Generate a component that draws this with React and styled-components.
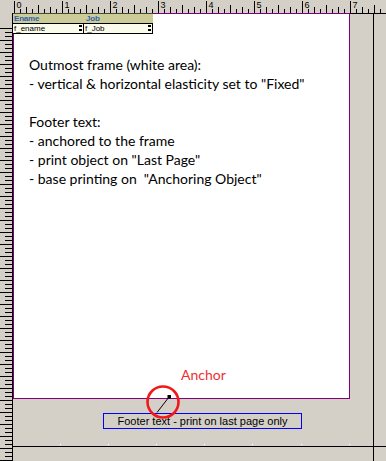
import React from "react"
import styled, { createGlobalStyle } from "styled-components"

const GlobalStyle = createGlobalStyle`
  html, body {
    margin: 0;
    padding: 0;
    background: #d4d0c8;
    overflow: hidden;
  }
`

const notes = [
  "Outmost frame (white area):",
  '- vertical & horizontal elasticity set to "Fixed"',
  "",
  "Footer text:",
  "- anchored to the frame",
  '- print object on "Last Page"',
  '- base printing on  "Anchoring Object"',
]

const TopTicks = () => {
  const ticks = []
  for (let k = 0; k < 62; k++) {
    const x = 1.5 + k * 6
    const m = k % 8
    const h = m === 0 ? 12 : m === 4 ? 8 : m % 2 === 0 ? 6 : 4
    ticks.push(<line key={k} x1={x} x2={x} y1={13 - h} y2={13} stroke="#000" strokeWidth="1" />)
    if (m === 0) {
      ticks.push(
        <text key={"n" + k} x={x + 2} y={8} fontSize="9" fontFamily="Liberation Sans, sans-serif" fill="#000">
          {k / 8}
        </text>
      )
    }
  }
  return (
    <svg width="373" height="13">
      {ticks}
    </svg>
  )
}

const SideTicks = () => {
  const ticks = []
  for (let k = 0; k < 113; k++) {
    const y = 15.5 + k * 4
    const long = k % 3 === 0
    ticks.push(<line key={k} x1={long ? 0 : 5} x2={12} y1={y} y2={y} stroke="#000" strokeWidth="1" />)
  }
  return (
    <svg width="12" height="448">
      {ticks}
    </svg>
  )
}

const BaseDots = () => (
  <svg width="360" height="2">
    {[47, 95, 143, 191, 239, 288, 336].map((x) => (
      <rect key={x} x={x} y={0} width="1" height="1" fill="#fff" />
    ))}
  </svg>
)

const AnchorMark = () => (
  <svg width="40" height="40" viewBox="0 0 40 40">
    <circle cx="19" cy="19" r="15.5" fill="none" stroke="#f01818" strokeWidth="2.6" />
    <line x1="25" y1="14" x2="13" y2="29.5" stroke="#000" strokeWidth="1" />
    <rect x="23.5" y="12" width="3.5" height="3.5" fill="#000" />
  </svg>
)

export default function App() {
  return (
    <>
      <GlobalStyle />
      <Window>
        <Corner />
        <TopRuler>
          <TopTicks />
        </TopRuler>
        <SideRuler>
          <SideTicks />
        </SideRuler>
        <Canvas>
          <Sheet>
            <Page>
              <Band>
                <BandHead>
                  <BandCell w={71}>Ename</BandCell>
                  <BandCell>Job</BandCell>
                </BandHead>
                <BandRow>
                  <FieldCell w={71}>
                    f_ename
                    <Handle />
                  </FieldCell>
                  <FieldCell>
                    f_Job
                    <Handle />
                  </FieldCell>
                </BandRow>
              </Band>
              <Notes>
                {notes.map((line, i) => (
                  <NoteLine key={i}>{line || "\u00a0"}</NoteLine>
                ))}
              </Notes>
              <AnchorLabel>Anchor</AnchorLabel>
            </Page>
            <FooterBox>Footer text - print on last page only</FooterBox>
            <AnchorSpot>
              <AnchorMark />
            </AnchorSpot>
            <Dots>
              <BaseDots />
            </Dots>
          </Sheet>
          <Cell />
          <Cell />
          <Cell />
        </Canvas>
      </Window>
    </>
  )
}

const Window = styled.div`
  display: grid;
  grid-template-columns: 13px 1fr;
  grid-template-rows: 13px 1fr;
  width: 386px;
  height: 461px;
  overflow: hidden;
  background: #d4d0c8;
`

const Corner = styled.div`
  background: #d4d0c8;
`

const TopRuler = styled.div`
  background: #d4d0c8;
  line-height: 0;
  overflow: hidden;
`

const SideRuler = styled.div`
  background: #d4d0c8;
  border-right: 1px solid #000;
  line-height: 0;
  overflow: hidden;
`

const Canvas = styled.div`
  display: grid;
  grid-template-columns: 360px 1fr;
  grid-template-rows: 432px 1fr;
  gap: 1px;
  padding-top: 1px;
  background: #000;
`

const Cell = styled.div`
  background: #d4d0c8;
`

const Sheet = styled.div`
  position: relative;
  background: #d4d0c8;
  display: flex;
  flex-direction: column;
  align-items: flex-start;
`

const Page = styled.div`
  box-sizing: border-box;
  width: 337px;
  height: 386px;
  margin-top: -1px;
  background: #fff;
  border: 1px solid #800080;
  font-family: Lato, "Open Sans", sans-serif;
  color: #000;
`

const Band = styled.div`
  margin: -1px 0 0 -1px;
  width: 140px;
  font-family: "Liberation Sans", Arial, sans-serif;
  font-size: 8px;
`

const BandHead = styled.div`
  display: flex;
  height: 9px;
  background: #cccc99;
  border-top: 1px solid #4a4a30;
`

const BandCell = styled.div`
  width: ${(p) => (p.w ? p.w + "px" : "auto")};
  flex: ${(p) => (p.w ? "none" : "1")};
  padding-left: 1px;
  color: #3060b0;
  font-weight: bold;
  line-height: 9px;
  letter-spacing: -0.2px;
`

const BandRow = styled.div`
  display: flex;
  height: 9px;
  background: #fbfbec;
  border-top: 1px solid #000;
  border-bottom: 1px solid #000;
`

const FieldCell = styled.div`
  position: relative;
  box-sizing: border-box;
  width: ${(p) => (p.w ? p.w + "px" : "auto")};
  flex: ${(p) => (p.w ? "none" : "1")};
  padding-left: 1px;
  line-height: 9px;
  color: #000;
  border-right: 1px solid #000;
`

const Handle = styled.span`
  position: absolute;
  right: 1px;
  top: 1px;
  width: 3px;
  height: 6px;
  border-top: 2px solid #000;
  border-bottom: 2px solid #000;
  box-sizing: border-box;
`

const Notes = styled.div`
  margin: 21px 0 0 15px;
  font-size: 14px;
  line-height: 19px;
`

const NoteLine = styled.div`
  white-space: pre;
`

const AnchorLabel = styled.div`
  margin: 177px 0 0 167px;
  font-size: 14px;
  line-height: 19px;
  color: #f03030;
`

const FooterBox = styled.div`
  box-sizing: border-box;
  width: 199px;
  height: 16px;
  margin: 14px 0 0 90px;
  border: 1px solid #0000ff;
  font-family: "Liberation Sans", Arial, sans-serif;
  font-size: 11px;
  line-height: 14px;
  text-align: center;
  color: #000;
`

const AnchorSpot = styled.div`
  position: absolute;
  left: 131px;
  top: 369px;
  line-height: 0;
`

const Dots = styled.div`
  position: absolute;
  left: 0;
  bottom: 0;
  line-height: 0;
`
